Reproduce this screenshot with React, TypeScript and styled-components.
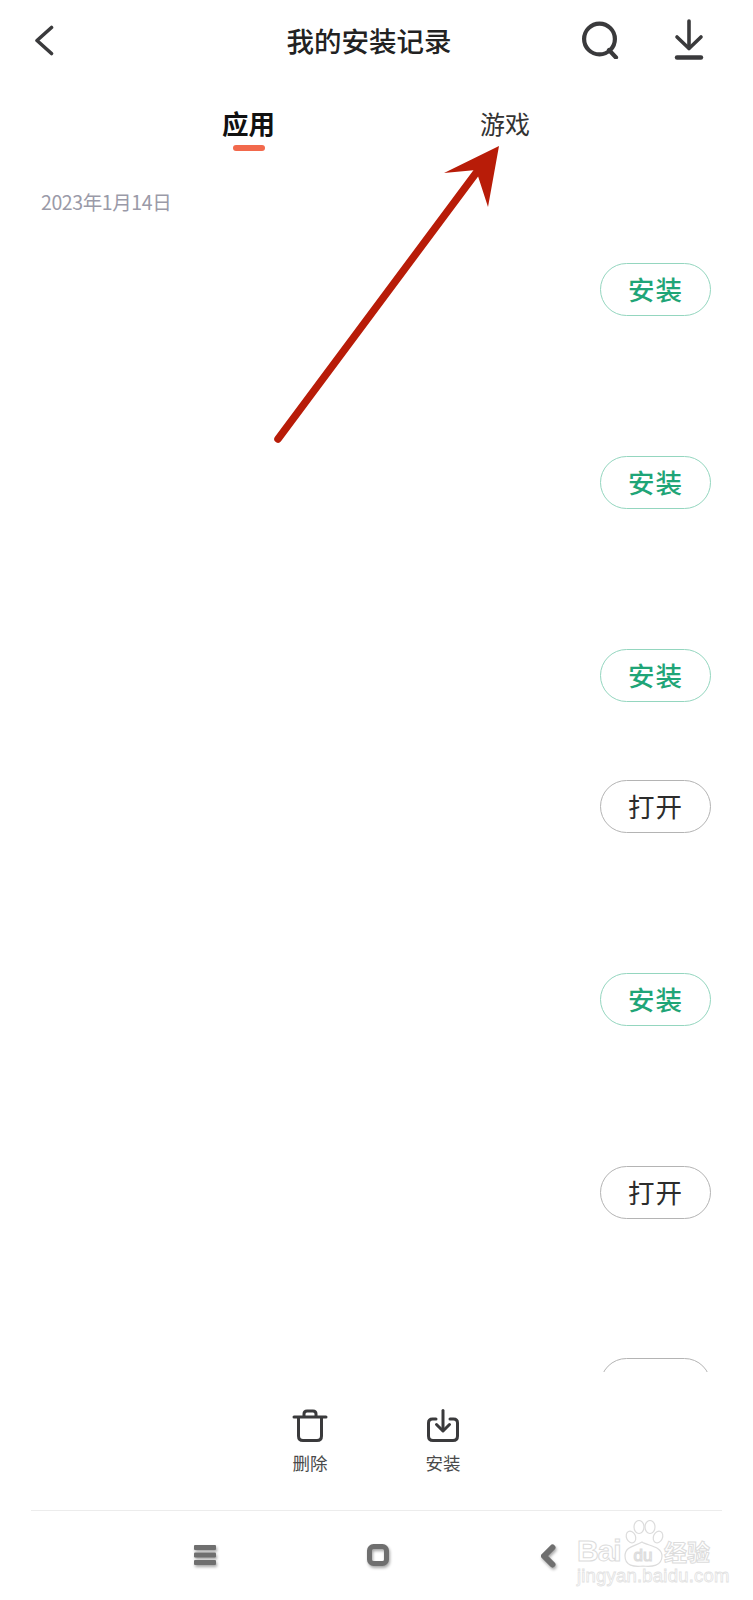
import styled, { createGlobalStyle } from 'styled-components'

const GlobalStyle = createGlobalStyle`
  html, body {
    margin: 0;
    padding: 0;
    background: #fff;
  }
  * {
    box-sizing: border-box;
  }
`

const records = [
  { id: 1, label: '安装', gap: 33 },
  { id: 2, label: '安装', gap: 140 },
  { id: 3, label: '安装', gap: 140 },
  { id: 4, label: '打开', gap: 78 },
  { id: 5, label: '安装', gap: 140 },
  { id: 6, label: '打开', gap: 140 },
  { id: 7, label: '打开', gap: 139 },
]

const App = () => {
  return (
    <Page>
      <GlobalStyle />
      <Header>
        <IconSlot>
          <svg width="20" height="31" viewBox="0 0 20 31" fill="none">
            <path d="M17.5 2.5 L3 15.5 L17.5 28.5" stroke="#3a3a3c" strokeWidth="3.6" strokeLinecap="round" strokeLinejoin="round" />
          </svg>
        </IconSlot>
        <Title>我的安装记录</Title>
        <HeaderActions>
          <svg width="38" height="38" viewBox="0 0 38 38" fill="none">
            <circle cx="18.5" cy="18" r="15.4" stroke="#3a3a3c" strokeWidth="4.2" />
            <path d="M28 29 L35 36.5" stroke="#3a3a3c" strokeWidth="4.2" strokeLinecap="round" />
          </svg>
          <svg width="30" height="42" viewBox="0 0 30 42" fill="none">
            <path d="M15 2 V29" stroke="#3a3a3c" strokeWidth="3.6" strokeLinecap="round" />
            <path d="M3 18 L15 29.5 L27 18" stroke="#3a3a3c" strokeWidth="3.6" strokeLinecap="round" strokeLinejoin="round" />
            <path d="M3 38.5 H27" stroke="#3a3a3c" strokeWidth="4.4" strokeLinecap="round" />
          </svg>
        </HeaderActions>
      </Header>

      <Tabs>
        <Tab $active>
          应用
          <TabMark />
        </Tab>
        <Tab>游戏</Tab>
      </Tabs>

      <DateLabel>2023年1月14日</DateLabel>

      <List>
        {records.map((record) => (
          <Row key={record.id} $gap={record.gap}>
            <ActionButton $green={record.label === '安装'}>{record.label}</ActionButton>
          </Row>
        ))}
      </List>

      <Footer>
        <FooterAction>
          <svg width="36" height="33" viewBox="0 0 36 33" fill="none">
            <path d="M2 8 H34" stroke="#3a3a3c" strokeWidth="3" strokeLinecap="round" />
            <path d="M12 7.5 V5 Q12 2 15 2 H21 Q24 2 24 5 V7.5" stroke="#3a3a3c" strokeWidth="3" />
            <path d="M6.5 8 V27 Q6.5 31.5 11 31.5 H25 Q29.5 31.5 29.5 27 V8" stroke="#3a3a3c" strokeWidth="3" />
          </svg>
          <span>删除</span>
        </FooterAction>
        <FooterAction>
          <svg width="36" height="33" viewBox="0 0 36 33" fill="none">
            <path d="M11 10 H7.5 Q3.5 10 3.5 14 V27 Q3.5 31.5 8 31.5 H28 Q32.500 31.5 32.5 27 V14 Q32.5 10 28.500 10 H25" stroke="#3a3a3c" strokeWidth="3" strokeLinecap="round" />
            <path d="M18 1.500 V21" stroke="#3a3a3c" strokeWidth="3" strokeLinecap="round" />
            <path d="M11.500 15.500 L18 22 L24.500 15.500" stroke="#3a3a3c" strokeWidth="3" strokeLinecap="round" strokeLinejoin="round" />
          </svg>
          <span>安装</span>
        </FooterAction>
      </Footer>

      <Divider />

      <NavBar>
        <NavIcon>
          <svg width="22" height="22" viewBox="0 0 22 22">
            <rect x="0" y="1" width="22" height="5" rx="1" fill="#6f6f6f" />
            <rect x="0" y="8.500" width="22" height="5" rx="1" fill="#6f6f6f" />
            <rect x="0" y="16" width="22" height="5" rx="1" fill="#6f6f6f" />
          </svg>
        </NavIcon>
        <NavIcon>
          <svg width="22" height="22" viewBox="0 0 22 22" fill="none">
            <rect x="2.500" y="2.500" width="17" height="17" rx="4" stroke="#6f6f6f" strokeWidth="5" />
          </svg>
        </NavIcon>
        <NavIcon>
          <svg width="16" height="24" viewBox="0 0 16 24" fill="none">
            <path d="M12.500 3.500 L4 12 L12.500 20.500" stroke="#6f6f6f" strokeWidth="6" strokeLinecap="round" strokeLinejoin="round" />
          </svg>
        </NavIcon>
      </NavBar>

      <ArrowOverlay width="753" height="460" viewBox="0 0 753 460">
        <path d="M278 439 L482 165" stroke="#b81c08" strokeWidth="7.500" strokeLinecap="round" />
        <path d="M499 146 L444 173 L476 170 L488 207 Z" fill="#b81c08" />
      </ArrowOverlay>

      <Watermark aria-hidden>
        <WatermarkTop>
          <WatermarkBrand>Bai</WatermarkBrand>
          <svg width="42" height="48" viewBox="0 0 42 48" fill="none" stroke="#dcdcdc" strokeWidth="1.200">
            <ellipse cx="9" cy="17" rx="4.500" ry="6" transform="rotate(-25 9 17)" />
            <ellipse cx="17" cy="7" rx="5" ry="6.500" />
            <ellipse cx="28" cy="7" rx="5" ry="6.500" />
            <ellipse cx="36" cy="17" rx="4.500" ry="6" transform="rotate(25 36 17)" />
            <path d="M3 36 C3 26 14 26 20 22 C26 26 40 26 40 36 C40 46 30 47 21 46 C12 47 3 46 3 36 Z" />
            <text x="21" y="41" textAnchor="middle" fontFamily="'Liberation Sans', sans-serif" fontSize="17" fill="none">du</text>
          </svg>
          <WatermarkCn>经验</WatermarkCn>
        </WatermarkTop>
        <WatermarkUrl>jingyan.baidu.com</WatermarkUrl>
      </Watermark>
    </Page>
  )
}

export default App

const Page = styled.div`
  position: relative;
  display: flex;
  flex-direction: column;
  width: 753px;
  height: 1600px;
  overflow: hidden;
  background: #fff;
  font-family: 'Noto Sans CJK SC', 'Noto Sans', sans-serif;
  color: #222;
`

const Header = styled.header`
  display: grid;
  grid-template-columns: 1fr auto 1fr;
  align-items: center;
  height: 80px;
  padding: 0 49px 0 34px;
`

const IconSlot = styled.div`
  display: flex;
  align-items: center;
`

const Title = styled.h1`
  margin: 0;
  font-size: 27.5px;
  font-weight: 500;
  line-height: 40px;
  color: #222;
`

const HeaderActions = styled.div`
  display: flex;
  justify-content: flex-end;
  align-items: center;
  gap: 55px;
`

const Tabs = styled.nav`
  display: flex;
  gap: 205px;
  height: 72px;
  padding: 24px 0 0 222px;
`

const Tab = styled.div<{ $active?: boolean }>`
  position: relative;
  display: flex;
  flex-direction: column;
  align-items: center;
  gap: 3px;
  height: 38px;
  font-size: ${(p) => (p.$active ? '26.5px' : '25px')};
  font-weight: ${(p) => (p.$active ? 700 : 400)};
  line-height: 38px;
  color: ${(p) => (p.$active ? '#111' : '#333')};
`

const TabMark = styled.span`
  display: block;
  flex: none;
  width: 32px;
  height: 6px;
  border-radius: 3px;
  background: #f2694c;
`

const DateLabel = styled.div`
  height: 78px;
  padding: 36px 0 0 41px;
  font-size: 19.5px;
  line-height: 28px;
  letter-spacing: -0.4px;
  color: #9a9aa8;
`

const List = styled.div`
  display: flex;
  flex-direction: column;
  flex: none;
  height: 1142px;
  overflow: hidden;
  padding-right: 42px;
`

const Row = styled.div<{ $gap: number }>`
  display: flex;
  flex: none;
  justify-content: flex-end;
  margin-top: ${(p) => p.$gap}px;
`

const ActionButton = styled.button<{ $green?: boolean }>`
  width: 111px;
  height: 53px;
  padding: 0;
  border-radius: 27px;
  border: 1.500px solid ${(p) => (p.$green ? '#94d6bf' : '#b4b4b4')};
  background: #fff;
  font-family: inherit;
  font-size: 26.5px;
  font-weight: ${(p) => (p.$green ? 500 : 400)};
  letter-spacing: 1px;
  line-height: 1;
  color: ${(p) => (p.$green ? '#1fa577' : '#2c2c2c')};
`

const Footer = styled.footer`
  display: flex;
  flex: none;
  gap: 53px;
  height: 138px;
  padding: 37px 0 0 270px;
`

const FooterAction = styled.div`
  display: flex;
  flex-direction: column;
  align-items: center;
  width: 80px;
  gap: 8px;
  font-size: 17.500px;
  line-height: 26px;
  color: #4a4a4a;
`

const Divider = styled.hr`
  flex: none;
  width: 691px;
  height: 1px;
  margin: 0 0 0 31px;
  border: 0;
  background: #ececec;
`

const NavBar = styled.div`
  display: flex;
  flex: 1;
  align-items: flex-start;
  gap: 151px;
  padding: 33px 0 0 194px;
`

const NavIcon = styled.div`
  display: flex;
  filter: drop-shadow(1px 2px 1.500px rgba(0, 0, 0, 0.35));
`

const ArrowOverlay = styled.svg`
  position: absolute;
  top: 0;
  left: 0;
  pointer-events: none;
`

const Watermark = styled.div`
  position: absolute;
  top: 1519px;
  left: 577px;
  display: flex;
  flex-direction: column;
  width: 136px;
  pointer-events: none;
`

const WatermarkTop = styled.div`
  display: flex;
  align-items: flex-end;
  height: 49px;
`

const WatermarkBrand = styled.span`
  width: 45px;
  font-family: 'Liberation Sans', sans-serif;
  font-size: 30px;
  font-weight: 700;
  line-height: 34px;
  letter-spacing: -1px;
  color: #fff;
  -webkit-text-stroke: 1px #dcdcdc;
`

const WatermarkCn = styled.span`
  font-size: 23px;
  font-weight: 700;
  line-height: 34px;
  color: #fff;
  -webkit-text-stroke: 1px #dcdcdc;
`

const WatermarkUrl = styled.span`
  font-family: 'Liberation Sans', sans-serif;
  font-size: 18.500px;
  line-height: 16px;
  letter-spacing: 0.2px;
  white-space: nowrap;
  color: #fff;
  -webkit-text-stroke: 0.8px #e2e2e2;
`
